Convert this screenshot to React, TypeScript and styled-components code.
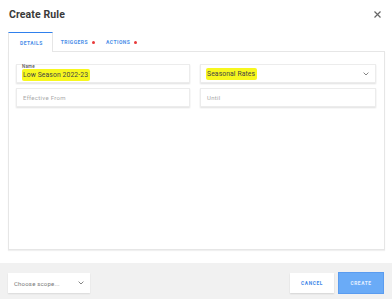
import React from "react";
import styled, { createGlobalStyle } from "styled-components";

const Global = createGlobalStyle`
  html, body { margin: 0; padding: 0; background: #fff; }
  body { font-family: Roboto, "Noto Sans", Arial, sans-serif; -webkit-font-smoothing: antialiased; }
  * { box-sizing: border-box; }
`;

const Modal = styled.div`
  width: 392px;
  height: 299px;
  display: flex;
  flex-direction: column;
  overflow: hidden;
  background: #fff;
`;

const Header = styled.div`
  height: 32px;
  display: flex;
  align-items: flex-start;
  justify-content: space-between;
  padding: 9px 10px 0 9px;
`;

const Title = styled.h1`
  margin: 0;
  font-size: 10.5px;
  font-weight: 700;
  color: #3a3a3a;
  letter-spacing: 0.1px;
  line-height: 12px;
`;

const Close = styled.button`
  border: 0;
  background: none;
  padding: 0;
  margin-top: 1px;
  width: 9px;
  height: 9px;
  display: flex;
  cursor: pointer;
`;

const Tabs = styled.div`
  display: flex;
  height: 19px;
  margin-left: 8px;
  margin-right: 7px;
`;

const Tab = styled.div<{ $active?: boolean }>`
  display: flex;
  align-items: center;
  gap: 4px;
  padding: 0 ${(p) => (p.$active ? "9px" : "3px")} 0 ${(p) => (p.$active ? "11px" : "8px")};
  font-size: 5px;
  font-weight: 700;
  letter-spacing: 0.45px;
  color: #4a8ee8;
  text-transform: uppercase;
  background: #fff;
  border-top: ${(p) => (p.$active ? "1.5px solid #2f80ed" : "1.5px solid transparent")};
  border-left: ${(p) => (p.$active ? "1px solid #e6e6e6" : "0")};
  border-right: ${(p) => (p.$active ? "1px solid #e6e6e6" : "0")};
  margin-bottom: ${(p) => (p.$active ? "-1px" : "0")};
  height: ${(p) => (p.$active ? "20px" : "19px")};
  position: relative;
  z-index: 1;
`;

const Dot = styled.span`
  width: 3px;
  height: 3px;
  border-radius: 50%;
  background: #e83a3a;
  display: inline-block;
`;

const Panel = styled.div`
  height: 199px;
  margin: 0 7px 0 8px;
  border: 1px solid #e6e6e6;
  box-shadow: 0 1px 1px rgba(0, 0, 0, 0.06);
  padding: 12px 8px 0 7px;
`;

const Grid = styled.div`
  display: grid;
  grid-template-columns: 174px 176px;
  column-gap: 10px;
  row-gap: 5px;
`;

const Field = styled.div`
  height: 19px;
  border: 1px solid #ececec;
  box-shadow: 0 1px 1.5px rgba(0, 0, 0, 0.12);
  background: #fff;
  position: relative;
  display: flex;
  align-items: center;
  padding: 0 6px 0 5px;
  justify-content: space-between;
`;

const Label = styled.span`
  position: absolute;
  top: -1px;
  left: 5px;
  font-size: 4.5px;
  color: #555;
  font-weight: 500;
  letter-spacing: 0.2px;
`;

const Value = styled.span<{ $offset?: boolean }>`
  font-size: 6.8px;
  color: #444;
  background: #f7f71e;
  padding: 2px 2px 2px 1px;
  margin-top: ${(p) => (p.$offset ? "3px" : "0")};
  border-radius: 2px;
  letter-spacing: 0.1px;
`;

const Placeholder = styled.span`
  font-size: 6px;
  color: #a9a9a9;
  letter-spacing: 0.3px;
  padding-left: 1px;
`;

const Footer = styled.div`
  margin-top: 13px;
  flex: 1;
  background: #f1f1f1;
  display: flex;
  align-items: flex-start;
  padding: 10px 9px 0 8px;
`;

const ScopeSelect = styled.div`
  width: 82px;
  height: 20px;
  background: #fff;
  box-shadow: 0 1px 1.5px rgba(0, 0, 0, 0.1);
  display: flex;
  align-items: center;
  justify-content: space-between;
  padding: 0 6px 0 6px;
  font-size: 6px;
  color: #777;
  letter-spacing: 0.2px;
`;

const Spacer = styled.div`
  flex: 1;
`;

const Button = styled.button<{ $primary?: boolean }>`
  height: 20px;
  width: 44px;
  border: 0;
  padding: 0;
  margin-left: 5px;
  font-family: inherit;
  font-size: 4.8px;
  font-weight: 700;
  letter-spacing: 0.6px;
  text-transform: uppercase;
  cursor: pointer;
  color: ${(p) => (p.$primary ? "#e6f1ff" : "#3d86e8")};
  background: ${(p) => (p.$primary ? "#6aabf7" : "#fff")};
  box-shadow: ${(p) =>
    p.$primary ? "0 0 0 1px #5a9cf0" : "0 1px 1.5px rgba(0,0,0,0.12)"};
`;

const Chevron = () => (
  <svg width="6" height="4" viewBox="0 0 6 4">
    <path d="M0.6 0.6 L3 3 L5.4 0.6" fill="none" stroke="#777" strokeWidth="0.9" />
  </svg>
);

export default function App() {
  return (
    <>
      <Global />
      <Modal>
        <Header>
          <Title>Create Rule</Title>
          <Close aria-label="Close">
            <svg width="9" height="9" viewBox="0 0 9 9">
              <path d="M1.5 1.5 L7.5 7.5 M7.5 1.5 L1.5 7.5" stroke="#666" strokeWidth="1.2" />
            </svg>
          </Close>
        </Header>
        <Tabs>
          <Tab $active>Details</Tab>
          <Tab>
            Triggers <Dot />
          </Tab>
          <Tab>
            Actions <Dot />
          </Tab>
        </Tabs>
        <Panel>
          <Grid>
            <Field>
              <Label>Name</Label>
              <Value $offset>Low Season 2022-23</Value>
            </Field>
            <Field>
              <Value>Seasonal Rates</Value>
              <Chevron />
            </Field>
            <Field>
              <Placeholder>Effective From</Placeholder>
            </Field>
            <Field>
              <Placeholder>Until</Placeholder>
            </Field>
          </Grid>
        </Panel>
        <Footer>
          <ScopeSelect>
            <span>Choose scope...</span>
            <Chevron />
          </ScopeSelect>
          <Spacer />
          <Button>Cancel</Button>
          <Button $primary>Create</Button>
        </Footer>
      </Modal>
    </>
  );
}
